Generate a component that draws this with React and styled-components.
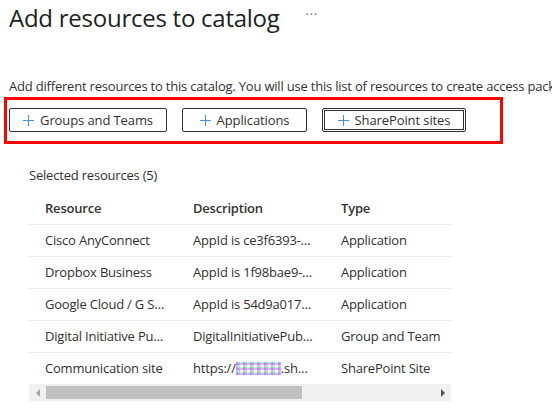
import React from "react";
import styled, { createGlobalStyle } from "styled-components";

const GlobalStyle = createGlobalStyle`
  html, body {
    margin: 0;
    padding: 0;
    background: #ffffff;
  }
  body {
    font-family: "Open Sans", "Noto Sans", sans-serif;
    color: #323130;
    overflow: hidden;
  }
`;

const Page = styled.div`
  width: 552px;
  height: 410px;
  padding: 0 0 0 9px;
  box-sizing: border-box;
  overflow: hidden;
`;

const Header = styled.header`
  display: flex;
  align-items: center;
  height: 36px;
  gap: 26px;
`;

const Title = styled.h1`
  margin: 0;
  font-size: 24px;
  font-weight: 500;
  letter-spacing: -0.25px;
  color: #201f1e;
  line-height: 32px;
`;

const More = styled.span`
  font-size: 12px;
  color: #605e5c;
  letter-spacing: 1px;
  margin-top: -8px;
`;

const Intro = styled.p`
  margin: 41px 0 0;
  font-size: 13px;
  line-height: 18px;
  white-space: nowrap;
  overflow: hidden;
  letter-spacing: -0.2px;
`;

const Highlight = styled.div`
  display: flex;
  gap: 15px;
  width: 499px;
  box-sizing: border-box;
  margin: 2px 0 0 -5px;
  padding: 8px 0 9px 2px;
  border: 3px solid #ff0000;
`;

const AddButton = styled.button`
  display: flex;
  align-items: center;
  justify-content: center;
  gap: 6px;
  width: ${({ $width }) => $width}px;
  height: 24px;
  padding: 0;
  box-sizing: border-box;
  background: #ffffff;
  border: 1px solid #323130;
  border-radius: 2px;
  font-family: inherit;
  font-size: 13px;
  font-weight: 500;
  letter-spacing: -0.1px;
  color: #323130;
  outline: ${({ $focused }) => ($focused ? "1px solid #323130" : "none")};
  outline-offset: -3px;
`;

const PlusIcon = () => (
  <svg width="11" height="11" viewBox="0 0 11 11">
    <path d="M5.5 0v11M0 5.5h11" stroke="#4a90d9" strokeWidth="1.1" />
  </svg>
);

const Section = styled.section`
  margin: 22px 0 0 20px;
  width: 422px;
`;

const SectionTitle = styled.div`
  font-size: 13px;
  line-height: 18px;
  letter-spacing: -0.2px;
  color: #323130;
`;

const TableViewport = styled.div`
  margin-top: 8px;
  width: 422px;
  overflow: hidden;
`;

const Table = styled.table`
  border-collapse: collapse;
  table-layout: fixed;
  width: 640px;
  font-size: 13px;
  letter-spacing: -0.2px;
`;

const HeadCell = styled.th`
  width: ${({ $width }) => $width || 148}px;
  height: 32px;
  padding: 0 12px 0 16px;
  box-sizing: border-box;
  text-align: left;
  font-weight: 600;
  color: #323130;
  border-bottom: 1px solid #edebe9;
`;

const Cell = styled.td`
  height: 32px;
  padding: 0 12px 0 16px;
  box-sizing: border-box;
  white-space: nowrap;
  overflow: hidden;
  text-overflow: ellipsis;
  color: #323130;
  border-bottom: ${({ $last }) => ($last ? "none" : "1px solid #edebe9")};
`;

const Redacted = styled.span`
  display: inline-block;
  width: 45px;
  height: 13px;
  vertical-align: -2px;
  background:
    repeating-linear-gradient(90deg, rgba(255, 0, 200, 0.35) 0 2px, rgba(0, 200, 255, 0.35) 2px 4px, rgba(255, 255, 0, 0.35) 4px 5px, transparent 5px 7px),
    repeating-linear-gradient(0deg, rgba(120, 0, 255, 0.3) 0 2px, rgba(0, 255, 120, 0.3) 2px 3px, transparent 3px 5px);
`;

const Scrollbar = styled.div`
  display: flex;
  align-items: center;
  height: 17px;
  background: #f0f0f0;
`;

const ArrowButton = styled.div`
  display: flex;
  align-items: center;
  justify-content: center;
  width: 17px;
  height: 17px;
  &::before {
    content: "";
    border-top: 4px solid transparent;
    border-bottom: 4px solid transparent;
    ${({ $dir, $active }) =>
      $dir === "left"
        ? `border-right: 4px solid ${$active ? "#505050" : "#a3a3a3"};`
        : `border-left: 4px solid ${$active ? "#505050" : "#a3a3a3"};`}
  }
`;

const Track = styled.div`
  flex: 1;
  height: 100%;
  display: flex;
  align-items: center;
`;

const Thumb = styled.div`
  height: 13px;
  background: #c1c1c1;
`;

const rows = [
  ["Cisco AnyConnect", "AppId is ce3f6393-c0a1-4e1b", "Application"],
  ["Dropbox Business", "AppId is 1f98bae9-62d1-4c3b", "Application"],
  ["Google Cloud / G Suite Connector", "AppId is 54d9a017-8e2f-4a71", "Application"],
  ["Digital Initiative Public Relations", "DigitalInitiativePublicRelations", "Group and Team"],
  ["Communication site", null, "SharePoint Site"],
];

const App = () => {
  const visible = 422;
  const content = 640;
  const trackWidth = visible - 34;
  const thumbWidth = Math.round((trackWidth * visible) / content);

  return (
    <>
      <GlobalStyle />
      <Page>
        <Header>
          <Title>Add resources to catalog</Title>
          <More>···</More>
        </Header>
        <Intro>
          Add different resources to this catalog. You will use this list of
          resources to create access packages.
        </Intro>
        <Highlight>
          <AddButton $width={158}>
            <PlusIcon />
            Groups and Teams
          </AddButton>
          <AddButton $width={125}>
            <PlusIcon />
            Applications
          </AddButton>
          <AddButton $width={144} $focused>
            <PlusIcon />
            SharePoint sites
          </AddButton>
        </Highlight>
        <Section>
          <SectionTitle>Selected resources (5)</SectionTitle>
          <TableViewport>
            <Table>
              <thead>
                <tr>
                  <HeadCell>Resource</HeadCell>
                  <HeadCell>Description</HeadCell>
                  <HeadCell $width={344}>Type</HeadCell>
                </tr>
              </thead>
              <tbody>
                {rows.map(([name, desc, type], i) => {
                  const last = i === rows.length - 1;
                  return (
                    <tr key={name}>
                      <Cell $last={last}>{name}</Cell>
                      <Cell $last={last}>
                        {desc ?? (
                          <>
                            https://
                            <Redacted />
                            .sharepoint.com/sites/comm
                          </>
                        )}
                      </Cell>
                      <Cell $last={last}>{type}</Cell>
                    </tr>
                  );
                })}
              </tbody>
            </Table>
            <Scrollbar>
              <ArrowButton $dir="left" />
              <Track>
                <Thumb style={{ width: thumbWidth }} />
              </Track>
              <ArrowButton $dir="right" $active />
            </Scrollbar>
          </TableViewport>
        </Section>
      </Page>
    </>
  );
};

export default App;
